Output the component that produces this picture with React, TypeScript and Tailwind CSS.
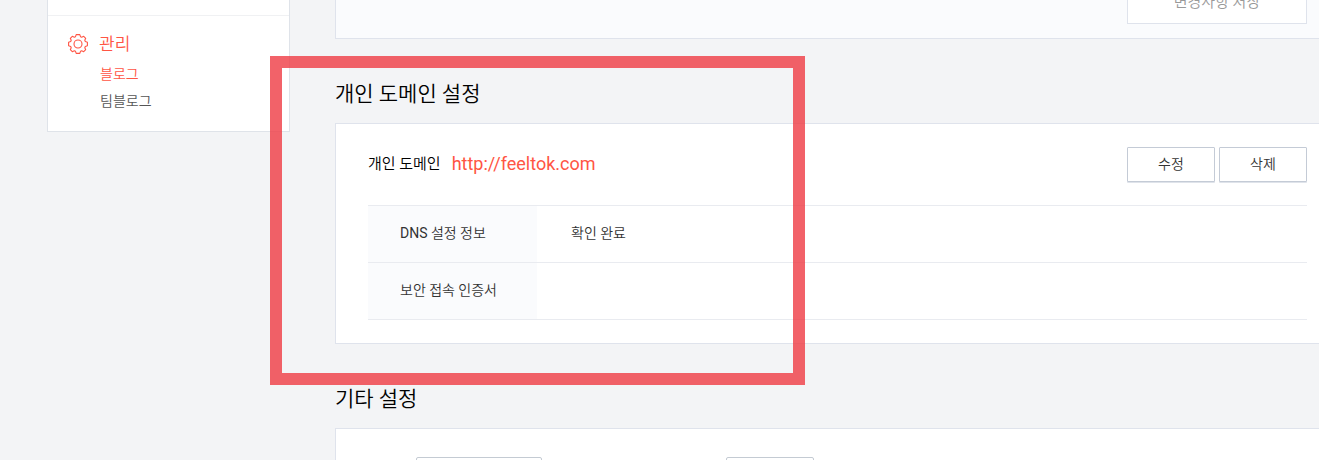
import type { ReactNode } from 'react';

type MenuItem = { label: string; active?: boolean };
type DomainRow = { id: string; label: ReactNode; value: string };

const MENU: MenuItem[] = [
    { label: '블로그', active: true },
    { label: '팀블로그' },
];

const ROWS: DomainRow[] = [
    {
        id: 'dns',
        label: (
            <>
                <abbr className="font-normal">DNS</abbr> 설정 정보
            </>
        ),
        value: '확인 완료',
    },
    { id: 'cert', label: '보안 접속 인증서', value: '' },
];

function GearIcon() {
    return (
        <svg
            width="20"
            height="20"
            viewBox="0 0 20 20"
            fill="none"
            stroke="currentColor"
            strokeWidth="1.1"
            strokeLinejoin="round"
            aria-hidden="true"
        >
            <circle cx="10" cy="10" r="4" />
            <path d="M8.200 .6h3.600l.7 2.100 1.200.5 2-.9 2 2-.9 2 .5 1.200 2.100.7v3.600l-2.100.7-.5 1.200.9 2-2 2-2-.9-1.200.5-.7 2.100H8.200l-.7-2.100-1.200-.5-2 .9-2-2 .9-2-.5-1.200L.6 11.800V8.200l2.100-.7.5-1.200-.9-2 2-2 2 .9 1.200-.5z" />
        </svg>
    );
}

function Sidebar() {
    return (
        <aside className="w-[243px] shrink-0 self-start border-x border-b border-[#dfe3e9] bg-white">
            <div className="h-4 border-b border-[#f0f1f3]" />
            <div className="px-5 pt-4 pb-4">
                <div className="flex items-center gap-[11px] text-[#ff5544]">
                    <GearIcon />
                    <h2 className="text-[17px] leading-6">관리</h2>
                </div>
                <ul className="mt-[5px] pl-8">
                    {MENU.map((m) => (
                        <li key={m.label} className="h-[27px]">
                            <a
                                href="#"
                                className={
                                    m.active
                                        ? 'text-sm leading-[27px] text-[#ff5544]'
                                        : 'text-sm leading-[27px] text-[#555555]'
                                }
                            >
                                {m.label}
                            </a>
                        </li>
                    ))}
                </ul>
            </div>
        </aside>
    );
}

function Section({ title, children }: { title: string; children: ReactNode }) {
    return (
        <section className="pt-[37px]">
            <h2 className="text-[21px] leading-9 text-black">{title}</h2>
            <div className="mt-[11px] border-y border-l border-[#dfe3ec] bg-white pl-8 pr-3">
                {children}
            </div>
        </section>
    );
}

function Button({ children }: { children: ReactNode }) {
    return (
        <button className="h-[35px] w-[88px] rounded-[1px] border border-[#c4cbd6] bg-white pb-[2px] text-sm text-[#333333] shadow-[0_1px_0_#dfe3ea]">
            {children}
        </button>
    );
}

export default function App() {
    return (
        <div className="relative h-screen overflow-hidden bg-[#f3f4f6] font-[Roboto,'Noto_Sans_CJK_KR',sans-serif] font-[350]">
            <div className="flex gap-[45px] pl-[47px]">
                <Sidebar />
                <main className="min-w-0 flex-1">
                    <div className="flex h-[39px] items-end justify-end border-b border-l border-[#dfe3ec] bg-[#fafbfd] pr-3 pb-[14px]">
                        <button className="h-11 w-[180px] shrink-0 border border-[#dfe3ec] bg-white text-[15px] text-[#999999]">
                            변경사항 저장
                        </button>
                    </div>

                    <Section title="개인 도메인 설정">
                        <div className="flex items-center py-[23px]">
                            <h3 className="text-[15px] text-black">
                                개인 도메인
                            </h3>
                            <a
                                href="http://feeltok.com"
                                className="ml-[11px] pb-[2px] text-lg leading-6 font-normal text-[#ff5544]"
                            >
                                http://feeltok.com
                            </a>
                            <div className="ml-auto flex gap-1">
                                <Button>수정</Button>
                                <Button>삭제</Button>
                            </div>
                        </div>
                        <table className="mb-[23px] w-full border-collapse text-left text-sm text-[#333333]">
                            <tbody>
                                {ROWS.map((r) => (
                                    <tr
                                        key={r.id}
                                        className="h-[57px] border-y border-[#e9ebf0]"
                                    >
                                        <th
                                            scope="row"
                                            className="w-[169px] bg-[#fafbfd] pb-[2px] pl-8 font-[350]"
                                        >
                                            {r.label}
                                        </th>
                                        <td className="pb-[2px] pl-[34px]">
                                            {r.value}
                                        </td>
                                    </tr>
                                ))}
                            </tbody>
                        </table>
                    </Section>

                    <Section title="기타 설정">
                        <div className="flex gap-[184px] py-7 pl-12">
                            <select
                                aria-label="언어"
                                className="h-9 w-[126px] appearance-none rounded-[2px] border border-[#c4cbd3] bg-white"
                            />
                            <select
                                aria-label="시간대"
                                className="h-9 w-[88px] appearance-none rounded-[2px] border border-[#c4cbd3] bg-white"
                            />
                        </div>
                    </Section>
                </main>
            </div>

            {/* highlight frame */}
            <div className="pointer-events-none absolute top-14 left-[270px] h-[329px] w-[535px] border-12 border-[#ef3b44]/80" />
        </div>
    );
}
